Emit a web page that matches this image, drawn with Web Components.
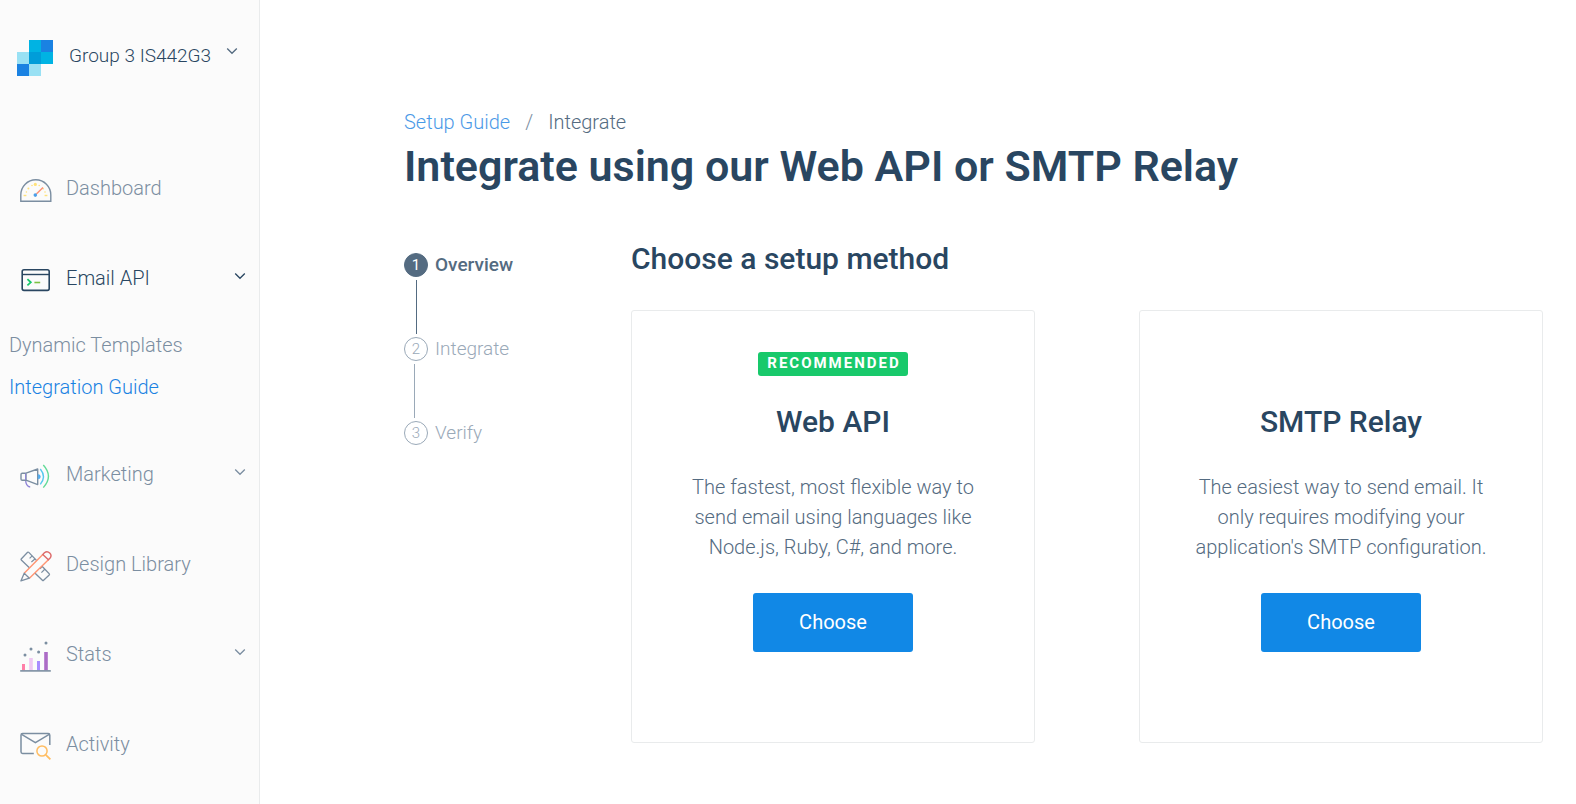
<!DOCTYPE html>
<html lang="en">
<head>
<meta charset="utf-8">
<title>Integrate using our Web API or SMTP Relay</title>
<style>
  :root {
    --slate-900: #294661;
    --slate-700: #546b81;
    --slate-500: #7b8ea1;
    --slate-300: #9aa9b8;
    --blue: #1188e6;
    --link: #1a82e2;
    --green: #18c96b;
    --line: #e9ebec;
    --panel: #fbfbfb;
  }
  body {
    margin: 0;
    background: #fff;
    color: var(--slate-700);
    font: 350 20px/30px Roboto, "Liberation Sans", sans-serif;
  }
</style>
</head>
<body>
<app-shell>
  <app-sidebar slot="sidebar">
    <account-switcher slot="account">Group 3 IS442G3</account-switcher>
    <nav-item icon="gauge" href="#dashboard">Dashboard</nav-item>
    <nav-item icon="terminal" expandable current>Email API</nav-item>
    <nav-group>
      <nav-sublink href="#templates">Dynamic Templates</nav-sublink>
      <nav-sublink href="#guide" current>Integration Guide</nav-sublink>
    </nav-group>
    <nav-item icon="megaphone" expandable>Marketing</nav-item>
    <nav-item icon="design" href="#design">Design Library</nav-item>
    <nav-item icon="stats" expandable>Stats</nav-item>
    <nav-item icon="activity" href="#activity">Activity</nav-item>
  </app-sidebar>

  <page-header>
    <a slot="parent" href="#setup">Setup Guide</a>
    <span slot="here">Integrate</span>
    Integrate using our Web API or SMTP Relay
  </page-header>

  <setup-layout>
    <setup-steps slot="steps">
      <setup-step number="1" active>Overview</setup-step>
      <setup-step number="2">Integrate</setup-step>
      <setup-step number="3" last>Verify</setup-step>
    </setup-steps>
    <span slot="heading">Choose a setup method</span>
    <method-card>
      <status-badge slot="badge">RECOMMENDED</status-badge>
      <span slot="title">Web API</span>
      The fastest, most flexible way to send email using languages like Node.js, Ruby, C#, and more.
    </method-card>
    <method-card>
      <span slot="title">SMTP Relay</span>
      The easiest way to send email. It only requires modifying your application's SMTP configuration.
    </method-card>
  </setup-layout>
</app-shell>

<script>
const ICONS = {
  gauge: `
    <path d="M2.8 29.3V22.8C2.8 14.5 9.5 7.7 17.8 7.7S32.8 14.5 32.8 22.8V29.3Z" stroke="currentColor" stroke-width="1.4"/>
    <g fill="#ffe27a" stroke="none"><circle cx="17.3" cy="12.4" r="1.6"/><circle cx="14" cy="13.5" r=".8"/><circle cx="21.2" cy="13.5" r=".8"/><circle cx="10.4" cy="16.4" r="1"/><circle cx="25.2" cy="16.8" r=".8"/><circle cx="8.4" cy="20" r=".8"/><circle cx="27" cy="20" r=".8"/><rect x="5.6" y="22.8" width="2.8" height="1.4"/><rect x="26.6" y="22.8" width="2.8" height="1.4"/></g>
    <path d="M18.4 22L25 15.4" stroke="#ff8f73" stroke-width="1.4"/>
    <circle cx="17.3" cy="23.1" r="1.8" fill="#4d9fe8" stroke="none"/>`,
  terminal: `
    <rect x="4.2" y="7.8" width="27" height="20.6" rx="1.8" stroke="currentColor" stroke-width="1.6"/>
    <path d="M4 12.5H31.4" stroke="currentColor" stroke-width="1.4"/>
    <path d="M9.4 17.2L12.8 20.3L9.4 23.4" stroke="#18c96b" stroke-width="1.8"/>
    <path d="M16.4 20.5H22.2" stroke="#7cc142" stroke-width="1.6"/>`,
  megaphone: `
    <path d="M7.6 22C7.8 26 9 28.6 12.2 29" stroke="#8f84d8" stroke-width="1.4"/>
    <path d="M8 15.2L19.7 11V26.6L8 22.2M8 15.2H4.2Q3 15.2 3 16.4V21Q3 22.2 4.2 22.2H8Z" stroke="currentColor" stroke-width="1.4" stroke-linejoin="round"/>
    <path d="M7.6 15.4V22" stroke="#8f84d8" stroke-width="1"/>
    <path d="M20.2 16.6A2.1 2.1 0 0 1 20.2 20.9Z" fill="#4dabf0" stroke="#4dabf0" stroke-width=".6"/>
    <path d="M22.3 11Q28.6 18.7 22.3 26.4" stroke="#55c8ee" stroke-width="1.4"/>
    <path d="M25.3 7Q35.6 18.4 25.3 29.6" stroke="#62da98" stroke-width="1.4"/>`,
  design: `
    <path d="M3.2 11L9.6 4.3Q10.2 3.8 10.8 4.4L31.2 25.8Q31.8 26.4 31.2 27L25.6 32.2Q25 32.8 24.4 32.2L3.3 12Q2.8 11.5 3.2 11Z" stroke="currentColor" stroke-width="1.3"/>
    <path d="M14.2 7.8L11.6 10.4M17.2 10.8L13.4 14M19.2 13L17 15.2M24.4 18.4L22 20.8M27 21L23.4 24.6" stroke="currentColor" stroke-width="1.2"/>
    <path d="M6.2 25.2L24.8 6.4L30.4 11.8L11.4 30.2Z" fill="#fbfbfb" stroke="none"/>
    <path d="M6.2 25.2L24.8 6.4M30.4 11.8L11.4 30.2" stroke="#ff9573" stroke-width="1.4"/>
    <path d="M24.8 6.4L26.4 4.8A3.9 3.9 0 0 1 31.9 10.3L30.4 11.8Z" fill="#fbfbfb" stroke="#dd6a6a" stroke-width="1.4"/>
    <path d="M6.2 25.2L2.9 32.9L11.4 30.2Z" fill="#fbfbfb" stroke="currentColor" stroke-width="1.3" stroke-linejoin="round"/>`,
  stats: `
    <g stroke="none"><rect x="4" y="26" width="3" height="6.4" fill="#ff7fa8"/><rect x="11.2" y="20" width="3.6" height="12.4" fill="#efc8f2"/><rect x="19" y="23" width="3" height="9.4" fill="#a98cff"/><rect x="26.2" y="14" width="3.6" height="18.4" fill="#ac6cc6"/>
    <g fill="currentColor"><circle cx="7" cy="17" r="1.5"/><circle cx="13" cy="11" r="1.5"/><circle cx="20.6" cy="14" r="1.5"/><circle cx="28" cy="5" r="1.5"/></g></g>
    <path d="M2.2 32.9H32.8" stroke="currentColor" stroke-width="1.6"/>`,
  activity: `
    <path d="M15.8 25.4H4.6Q3 25.4 3 23.8V7.2Q3 5.6 4.6 5.6H30.2Q31.8 5.6 31.8 7.2V17" stroke="currentColor" stroke-width="1.5"/>
    <path d="M3.6 6.4L17.4 14.6L31.2 6.4" stroke="currentColor" stroke-width="1.4"/>
    <circle cx="24" cy="23" r="5.1" stroke="#ffbd62" stroke-width="1.5"/>
    <path d="M27.8 26.8L32.4 31.4" stroke="#ffbd62" stroke-width="1.8"/>`
};

/* The arrow sits in the upper part of its box, level with the text's x-height. */
const CHEVRON = `<svg class="chevron" viewBox="0 0 12 14" width="12" height="14" fill="none" stroke="currentColor" stroke-width="1.3" aria-hidden="true"><path d="M1.2 1.5L6 6.3L10.8 1.5"/></svg>`;

const define = (name, render) => customElements.define(name, class extends HTMLElement {
  constructor() {
    super();
    this.attachShadow({ mode: "open" });
  }
  connectedCallback() {
    this.shadowRoot.innerHTML = render(this);
  }
});

define("app-shell", () => `
  <style>
    :host { display: grid; grid-template-columns: 260px minmax(0, 1fr); min-height: 100vh; }
    main { padding: 110px 33px 40px 144px; }
  </style>
  <slot name="sidebar"></slot>
  <main><slot></slot></main>`);

define("app-sidebar", () => `
  <style>
    :host { display: block; box-sizing: border-box; background: var(--panel); border-right: 1px solid var(--line); }
    header { height: 104px; padding-top: 40px; }
  </style>
  <header><slot name="account"></slot></header>
  <nav aria-label="Main"><slot></slot></nav>`);

define("account-switcher", () => `
  <style>
    :host { display: block; padding: 0 21px 0 17px; }
    button { all: unset; box-sizing: border-box; display: flex; align-items: center; width: 100%; height: 36px;
      color: var(--slate-900); font-size: 19px; line-height: 24px; font-weight: 300; cursor: pointer; }
    .name { flex: 1; padding: 0 0 4px 16px; }
    .chevron { padding-bottom: 8px; color: var(--slate-700); }
  </style>
  <button type="button">
    <svg viewBox="0 0 36 36" width="36" height="36" shape-rendering="crispEdges" aria-hidden="true">
      <path fill="#00b3e3" d="M12 0h12v12H12zM24 12h12v12H24z"/>
      <path fill="#1a82e2" d="M24 0h12v12H24zM0 24h12v12H0z"/>
      <path fill="#99e1f4" d="M0 12h12v12H0zM12 24h12v12H12z"/>
      <path fill="#009dd9" d="M12 12h12v12H12z"/>
    </svg>
    <span class="name"><slot></slot></span>${CHEVRON}
  </button>`);

define("nav-item", el => {
  const expandable = el.hasAttribute("expandable");
  const open = expandable ? `button type="button" aria-expanded="${el.hasAttribute("current")}"` : `a href="${el.getAttribute("href")}"`;
  return `
  <style>
    :host { display: block; color: var(--slate-500); }
    :host([current]) { color: var(--slate-900); }
    a, button { all: unset; box-sizing: border-box; display: flex; align-items: center; gap: 14px;
      width: 100%; height: 90px; padding: 0 13px 0 18px; cursor: pointer; }
    .label { flex: 1; padding-bottom: 2px; }
  </style>
  <${open}>
    <svg viewBox="0 0 34 34" width="34" height="34" fill="none" aria-hidden="true">${ICONS[el.getAttribute("icon")]}</svg>
    <span class="label"><slot></slot></span>${expandable ? CHEVRON : ""}
  </${expandable ? "button" : "a"}>`;
});

define("nav-group", () => `
  <style>:host { display: block; padding-bottom: 22px; }</style>
  <slot></slot>`);

define("nav-sublink", el => `
  <style>
    :host { display: block; }
    a { display: block; padding: 0 9px; line-height: 42px; color: var(--slate-500); text-decoration: none; }
    :host([current]) a { color: var(--link); }
  </style>
  <a href="${el.getAttribute("href")}"><slot></slot></a>`);

define("page-header", () => `
  <style>
    :host { display: block; }
    nav { display: flex; gap: 15px; line-height: 24px; }
    ::slotted(a) { color: var(--link); text-decoration: none; opacity: .8; }
    .divider { color: var(--slate-500); }
    h1 { margin: 4px 0 0; font-size: 43px; line-height: 56px; font-weight: 600; color: var(--slate-900); }
  </style>
  <nav aria-label="Breadcrumb"><slot name="parent"></slot><span class="divider">/</span><slot name="here"></slot></nav>
  <h1><slot></slot></h1>`);

define("setup-layout", () => `
  <style>
    :host { display: grid; grid-template-columns: 227px minmax(0, 1fr); margin-top: 45px; }
    aside { padding-top: 14px; }
    h2 { margin: 0 0 31px; font-size: 30px; line-height: 40px; font-weight: 500; color: var(--slate-900); }
    .cards { display: grid; grid-template-columns: repeat(auto-fit, minmax(320px, 1fr)); gap: 40px 104px; }
  </style>
  <aside><slot name="steps"></slot></aside>
  <section>
    <h2><slot name="heading"></slot></h2>
    <div class="cards"><slot></slot></div>
  </section>`);

define("setup-steps", () => `
  <style>:host { display: block; }</style>
  <div role="list"><slot></slot></div>`);

define("setup-step", el => `
  <style>
    :host { display: block; font-size: 19px; line-height: 24px; font-weight: 300; color: var(--slate-300); }
    :host([active]) { color: var(--slate-700); font-weight: 500; }
    .row { display: flex; align-items: center; gap: 7px; }
    .dot { box-sizing: border-box; width: 24px; height: 24px; border: 1px solid currentColor; border-radius: 50%;
      font-size: 15px; line-height: 22px; text-align: center; font-weight: 300; }
    :host([active]) .dot { background: var(--slate-700); border-color: var(--slate-700); color: #fff; font-weight: 400; }
    .link { width: 1px; height: 54px; margin: 3px 0 3px 10px; background: currentColor; }
    :host([active]) .link { margin-left: 12px; }
    :host([last]) .link { display: none; }
  </style>
  <div role="listitem">
    <div class="row"><span class="dot">${el.getAttribute("number")}</span><span><slot></slot></span></div>
    <div class="link"></div>
  </div>`);

define("status-badge", () => `
  <style>
    :host { box-sizing: border-box; display: block; height: 24px; padding: 0 7px 0 9px; border-radius: 3px;
      background: var(--green); color: #fff; font-size: 15px; line-height: 22px; font-weight: 700; letter-spacing: 2px; }
  </style>
  <slot></slot>`);

define("method-card", () => `
  <style>
    :host { display: block; }
    article { box-sizing: border-box; display: flex; flex-direction: column; align-items: center; height: 100%;
      padding: 41px 46px 90px; border: 1px solid var(--line); border-radius: 3px; text-align: center; }
    .badge { display: flex; min-height: 24px; }
    h3 { margin: 26px 0 30px; font-size: 30px; line-height: 40px; font-weight: 500; color: var(--slate-900); }
    p { margin: 0 0 31px; }
    button { width: 160px; height: 59px; padding: 0 0 2px; border: 0; border-radius: 3px; background: var(--blue); color: #fff;
      font: inherit; font-weight: 400; cursor: pointer; }
  </style>
  <article>
    <div class="badge"><slot name="badge"></slot></div>
    <h3><slot name="title"></slot></h3>
    <p><slot></slot></p>
    <button type="button">Choose</button>
  </article>`);
</script>
</body>
</html>
